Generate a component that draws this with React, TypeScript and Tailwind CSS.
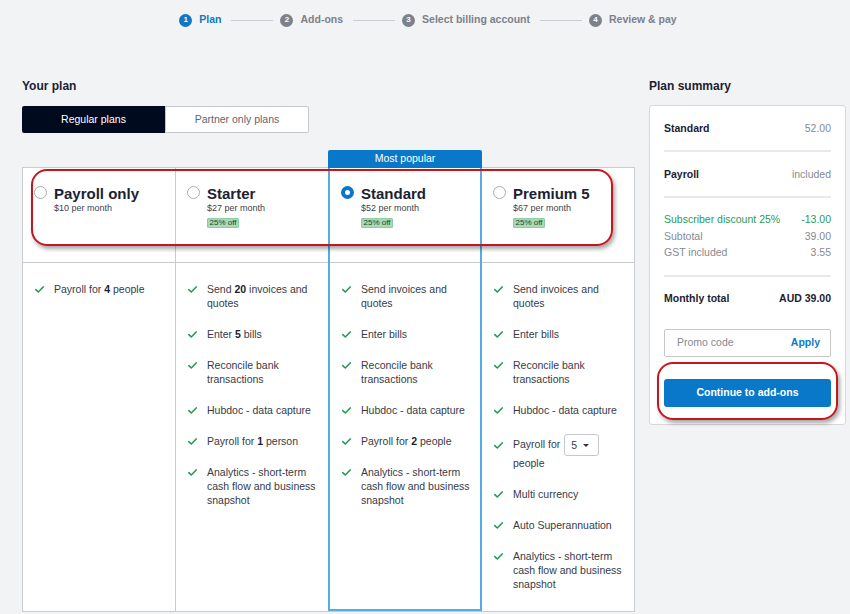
import React from "react";

const FONT = { fontFamily: '"Liberation Sans", Arial, sans-serif' };

function Check() {
  return (
    <svg width="9" height="7" viewBox="0 0 9 7" fill="none">
      <polyline points="0.8,3.6 3.3,6 8.2,0.9" stroke="#1f9a52" strokeWidth="1.5" strokeLinecap="round" strokeLinejoin="round" />
    </svg>
  );
}

function Step({ n, label, active }: { n: number; label: string; active?: boolean }) {
  return (
    <div className="flex items-center gap-[7px]">
      <div
        className={
          "flex h-[13px] w-[13px] items-center justify-center rounded-full text-[8px] font-bold leading-none text-white " +
          (active ? "bg-[#0f78c5]" : "bg-[#7c818a]")
        }
      >
        {n}
      </div>
      <span className={"text-[10.5px] font-bold " + (active ? "text-[#0f78c5]" : "text-[#7c818a]")}>{label}</span>
    </div>
  );
}

function Line() {
  return <div className="ml-[10px] mr-[7px] h-px w-[42px] bg-[#c9ccd1]" />;
}

function Radio({ selected }: { selected?: boolean }) {
  return selected ? (
    <div className="mt-[1px] h-[13px] w-[13px] shrink-0 rounded-full border-[4px] border-[#0a78c8] bg-white" />
  ) : (
    <div className="mt-[1px] h-[13px] w-[13px] shrink-0 rounded-full border border-[#a9adb3] bg-white" />
  );
}

function Header({ title, price, badge, selected }: { title: string; price: string; badge?: boolean; selected?: boolean }) {
  return (
    <div className="flex h-[95px] gap-[7px] border-b border-[#c8cbd0] pl-[11px] pt-[17px]">
      <Radio selected={selected} />
      <div className="flex flex-col">
        <div className="text-[15px] font-bold leading-[18px] text-[#1b2232]">{title}</div>
        <div className="text-[9px] leading-[11px] text-[#3d4350]">{price}</div>
        {badge && (
          <div className="mt-[4px] flex h-[10px] w-[32px] items-center justify-center rounded-[1px] border border-[#8fcca4] bg-[#a6dbb8] text-[8px] leading-none text-[#24432f]">
            25% off
          </div>
        )}
      </div>
    </div>
  );
}

type Item = { node: React.ReactNode; tall?: boolean };

function Features({ items }: { items: Item[] }) {
  return (
    <ul className="flex flex-col gap-[17px] pt-[19px] pb-[20px]">
      {items.map((it, i) => (
        <li key={i} className="flex">
          <div className={"flex w-[31px] shrink-0 items-center pl-[12px] " + (it.tall ? "h-[22px]" : "h-[14px]")}>
            <Check />
          </div>
          <div className="pr-[8px] text-[10.5px] leading-[14px] text-[#363b47]">{it.node}</div>
        </li>
      ))}
    </ul>
  );
}

function PayrollSelect() {
  return (
    <div>
      <div className="flex h-[22px] items-center">
        <span className="-mt-[2px]">Payroll for</span>
        <span className="ml-[4px] inline-flex h-[22px] w-[35px] items-center gap-[6px] rounded-[3px] border border-[#c5c8cd] bg-white pl-[6px]">
          <span>5</span>
          <span className="h-0 w-0 border-x-[3px] border-t-[3px] border-x-transparent border-t-[#333]" />
        </span>
      </div>
      <div>people</div>
    </div>
  );
}

const analytics = "Analytics - short-term cash flow and business snapshot";
const B = ({ children }: { children: React.ReactNode }) => <b className="text-[#1b2232]">{children}</b>;

export default function App() {
  const col1: Item[] = [{ node: <>Payroll for <B>4</B> people</> }];
  const col2: Item[] = [
    { node: <>Send <B>20</B> invoices and quotes</> },
    { node: <>Enter <B>5</B> bills</> },
    { node: "Reconcile bank transactions" },
    { node: "Hubdoc - data capture" },
    { node: <>Payroll for <B>1</B> person</> },
    { node: analytics },
  ];
  const col3: Item[] = [
    { node: "Send invoices and quotes" },
    { node: "Enter bills" },
    { node: "Reconcile bank transactions" },
    { node: "Hubdoc - data capture" },
    { node: <>Payroll for <B>2</B> people</> },
    { node: analytics },
  ];
  const col4: Item[] = [
    { node: "Send invoices and quotes" },
    { node: "Enter bills" },
    { node: "Reconcile bank transactions" },
    { node: "Hubdoc - data capture" },
    { node: <PayrollSelect />, tall: true },
    { node: "Multi currency" },
    { node: "Auto Superannuation" },
    { node: analytics },
  ];

  return (
    <div className="min-h-[614px] w-[850px] bg-[#f2f3f5]" style={FONT}>
      <div className="flex h-[38px] items-center justify-center pl-[6px] pt-[2px]">
        <Step n={1} label="Plan" active />
        <Line />
        <Step n={2} label="Add-ons" />
        <Line />
        <Step n={3} label="Select billing account" />
        <Line />
        <Step n={4} label="Review & pay" />
      </div>

      <div className="flex gap-[14px] pl-[22px]">
        {/* Left */}
        <div className="w-[613px]">
          <div className="mt-[41px] text-[12px] font-bold leading-[14px] text-[#1b2232]">Your plan</div>
          <div className="mt-[13px] flex h-[27px] w-[287px]">
            <div className="flex w-[143px] items-center justify-center rounded-l-[2px] bg-[#000a1f] text-[10.5px] text-white">
              Regular plans
            </div>
            <div className="flex flex-1 items-center justify-center rounded-r-[2px] border border-[#c5c8cd] bg-white text-[10.5px] text-[#5f6571]">
              Partner only plans
            </div>
          </div>

          <div className="relative mt-[34px] flex min-h-[444px] border border-[#c8cbd0] bg-white">
            <div className="w-[153px] border-r border-[#c8cbd0]">
              <Header title="Payroll only" price="$10 per month" />
              <Features items={col1} />
            </div>
            <div className="w-[152px]">
              <Header title="Starter" price="$27 per month" badge />
              <Features items={col2} />
            </div>
            <div className="relative w-[154px] border-x-2 border-b-2 border-[#55abe6]">
              <div className="absolute -left-[2px] -right-[2px] -top-[18px] flex h-[18px] items-center justify-center rounded-t-[2px] bg-[#0a78c8] text-[10.5px] text-white">
                Most popular
              </div>
              <Header title="Standard" price="$52 per month" badge selected />
              <Features items={col3} />
            </div>
            <div className="flex-1">
              <Header title="Premium 5" price="$67 per month" badge />
              <Features items={col4} />
            </div>

            <div className="pointer-events-none absolute left-[8px] top-[1px] z-10 h-[77px] w-[582px] rounded-[16px] border-2 border-[#c4161c] shadow-[2px_3px_4px_rgba(0,0,0,0.35)]" />
          </div>
        </div>

        {/* Right */}
        <div className="w-[197px]">
          <div className="mt-[41px] text-[12px] font-bold leading-[14px] text-[#1b2232]">Plan summary</div>
          <div className="mt-[12px] rounded-[3px] border border-[#d5d8dc] bg-white pl-[14px] pr-[14px] pb-[17px] text-[10.5px]">
            <div className="flex justify-between py-[15px] leading-[14px]">
              <span className="font-bold text-[#1b2232]">Standard</span>
              <span className="text-[#858a93]">52.00</span>
            </div>
            <div className="h-[2px] bg-[#e8e9ec]" />
            <div className="flex justify-between py-[15px] leading-[14px]">
              <span className="font-bold text-[#1b2232]">Payroll</span>
              <span className="text-[#858a93]">included</span>
            </div>
            <div className="h-[2px] bg-[#e8e9ec]" />
            <div className="pb-[14px] pt-[13px] leading-[16.5px]">
              <div className="flex justify-between text-[#2b9955]">
                <span>Subscriber discount 25%</span>
                <span>-13.00</span>
              </div>
              <div className="flex justify-between text-[#858a93]">
                <span>Subtotal</span>
                <span>39.00</span>
              </div>
              <div className="flex justify-between text-[#858a93]">
                <span>GST included</span>
                <span>3.55</span>
              </div>
            </div>
            <div className="h-[2px] bg-[#e8e9ec]" />
            <div className="flex justify-between pt-[14px] font-bold leading-[14px] text-[#1b2232]">
              <span>Monthly total</span>
              <span>AUD 39.00</span>
            </div>
            <div className="mt-[24px] flex h-[28px] items-center justify-between rounded-[2px] border border-[#c5c8cd] pl-[12px] pr-[10px]">
              <span className="text-[#858a93]">Promo code</span>
              <span className="font-bold text-[#0a78c8]">Apply</span>
            </div>
            <div className="relative mt-[22px]">
              <div className="flex h-[28px] items-center justify-center rounded-[3px] bg-[#0a78c8] font-bold text-white">
                Continue to add-ons
              </div>
              <div className="pointer-events-none absolute -bottom-[13px] -left-[7px] -right-[7px] -top-[17px] rounded-[16px] border-2 border-[#c4161c] shadow-[2px_3px_4px_rgba(0,0,0,0.35)]" />
            </div>
          </div>
        </div>
      </div>
    </div>
  );
}
